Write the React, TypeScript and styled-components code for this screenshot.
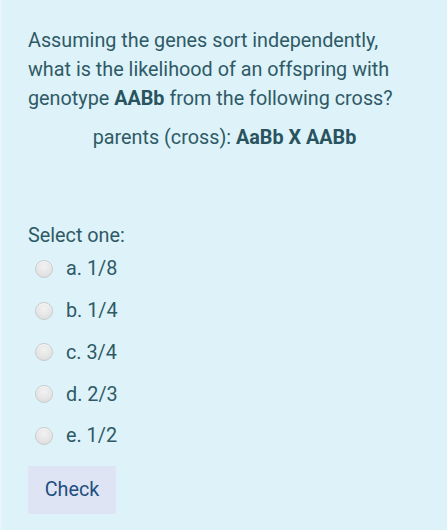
import React from 'react';
import styled, { createGlobalStyle } from 'styled-components';

const GlobalStyle = createGlobalStyle`
  html, body {
    margin: 0;
    padding: 0;
    background: #def2f9;
  }
  body {
    font-family: Roboto, "Liberation Sans", Arial, sans-serif;
    color: #2e5a66;
  }
`;

const Card = styled.div`
  box-sizing: border-box;
  width: 447px;
  min-height: 530px;
  padding: 26px 20px 16px 26px;
  background: #def2f9;
  border-left: 2px solid #e7f5fa;
`;

const Question = styled.p`
  margin: 0;
  font-size: 19.8px;
  line-height: 29px;
`;

const Cross = styled.p`
  margin: 10px 0 0 0;
  font-size: 19.8px;
  line-height: 29px;
  text-align: center;
  padding-right: 6px;
`;

const Strong = styled.b`
  font-weight: 700;
  color: #29535f;
`;

const Prompt = styled.div`
  margin-top: 72px;
  font-size: 19.8px;
  line-height: 24px;
`;

const Options = styled.div`
  display: flex;
  flex-direction: column;
`;

const Option = styled.label`
  display: flex;
  align-items: center;
  height: 41.75px;
  font-size: 19.8px;
  cursor: pointer;
`;

const Radio = styled.span`
  box-sizing: border-box;
  width: 18px;
  height: 18px;
  margin-left: 7px;
  margin-right: 13px;
  border-radius: 50%;
  border: 1px solid #c9cccd;
  background: radial-gradient(circle at 50% 35%, #f2f2f2 0%, #e4e4e4 60%, #d8d8d8 100%);
  box-shadow: inset 0 1px 1px rgba(255, 255, 255, 0.7);
`;

const CheckButton = styled.button`
  margin-top: 9px;
  width: 88px;
  height: 48px;
  padding: 0;
  border: none;
  border-radius: 0;
  background: #dfe4f4;
  color: #1d4f7f;
  font-family: Roboto, "Liberation Sans", Arial, sans-serif;
  font-size: 19.8px;
  cursor: pointer;
`;

const answers = ['a. 1/8', 'b. 1/4', 'c. 3/4', 'd. 2/3', 'e. 1/2'];

const App = () => {
  return (
    <>
      <GlobalStyle />
      <Card>
        <Question>
          Assuming the genes sort independently,
          <br />
          what is the likelihood of an offspring with
          <br />
          genotype <Strong>AABb</Strong> from the following cross?
        </Question>
        <Cross>
          parents (cross): <Strong>AaBb X AABb</Strong>
        </Cross>
        <Prompt>Select one:</Prompt>
        <Options>
          {answers.map((a) => (
            <Option key={a}>
              <Radio />
              {a}
            </Option>
          ))}
        </Options>
        <CheckButton>Check</CheckButton>
      </Card>
    </>
  );
};

export default App;
